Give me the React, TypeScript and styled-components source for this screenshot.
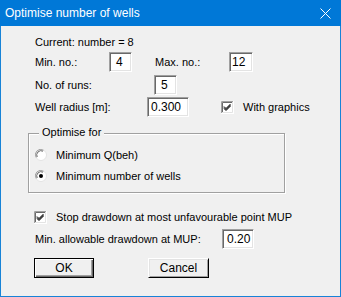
import React from "react";
import styled, { createGlobalStyle } from "styled-components";

const GlobalStyle = createGlobalStyle`
    html, body {
        margin: 0;
        padding: 0;
        background: #f0f0f0;
    }
`;

const Window = styled.div`
    width: 341px;
    height: 297px;
    box-sizing: border-box;
    border: 1px solid #1883d7;
    border-top: none;
    background: #f0f0f0;
    display: flex;
    flex-direction: column;
    font-family: "Liberation Sans", Arial, sans-serif;
    font-size: 11px;
    color: #000;
`;

const TitleBar = styled.div`
    height: 26px;
    margin: 0 -1px;
    background: #0078d7;
    color: #fff;
    display: flex;
    align-items: center;
    justify-content: space-between;
    padding: 0 10px 0 5px;
    font-size: 12px;
    flex-shrink: 0;
`;

const Title = styled.span`
    margin-top: -1px;
`;

const Body = styled.div`
    display: flex;
    flex-direction: column;
    padding: 9px 0 0 34px;
`;

const Row = styled.div<{ $h?: number; $mt?: number }>`
    display: flex;
    align-items: center;
    height: ${p => p.$h ?? 20}px;
    margin-top: ${p => p.$mt ?? 0}px;
`;

const Label = styled.span<{ $w?: number; $ml?: number }>`
    width: ${p => (p.$w ? `${p.$w}px` : 'auto')};
    margin-left: ${p => p.$ml ?? 0}px;
    white-space: nowrap;
    flex-shrink: 0;
`;

const Input = styled.div<{ $w: number; $pad?: number }>`
    width: ${p => p.$w}px;
    height: 20px;
    box-sizing: border-box;
    background: #fff;
    border-top: 1px solid #a0a0a0;
    border-left: 1px solid #a0a0a0;
    border-right: 1px solid #fff;
    border-bottom: 1px solid #fff;
    box-shadow: inset 1px 1px 0 #696969, inset -1px -1px 0 #e3e3e3;
    padding-left: ${p => p.$pad ?? 3}px;
    display: flex;
    align-items: center;
    font-size: 12px;
    flex-shrink: 0;
`;

const Group = styled.div`
    position: relative;
    margin: 16px 0 0 -7px;
    width: 257px;
    box-sizing: border-box;
    border: 1px solid #a0a0a0;
    box-shadow: 1px 1px 0 #fff, inset 1px 1px 0 #fff;
    padding: 13px 0 8px 6px;
    display: flex;
    flex-direction: column;
    gap: 5px;
`;

const Caption = styled.span`
    position: absolute;
    top: -8px;
    left: 10px;
    padding: 0 3px;
    background: #f0f0f0;
`;

const OptionRow = styled.div<{ $mt?: number; $ml?: number }>`
    display: flex;
    align-items: center;
    height: 16px;
    margin-top: ${p => p.$mt ?? 0}px;
    margin-left: ${p => p.$ml ?? 0}px;
    gap: 9px;
`;

const Buttons = styled.div`
    display: flex;
    gap: 54px;
    margin: 9px 0 0 -1px;
`;

const Button = styled.button<{ $default?: boolean; $w: number }>`
    width: ${p => p.$w}px;
    height: 20px;
    box-sizing: border-box;
    padding: 0;
    margin: 0;
    background: #f0f0f0;
    font-family: "Liberation Sans", Arial, sans-serif;
    font-size: 12px;
    color: #000;
    border: 1px solid ${p => (p.$default ? '#000' : '#fff')};
    border-right-color: #000;
    border-bottom-color: #000;
    box-shadow: ${p => (p.$default
        ? 'inset 1px 1px 0 #fff, inset -1px -1px 0 #696969, inset -2px -2px 0 #a0a0a0'
        : 'inset 1px 1px 0 #e3e3e3, inset -1px -1px 0 #a0a0a0')};
`;

const CloseIcon = () => (
    <svg width="11" height="11" viewBox="0 0 11 11">
        <path d="M0.5 0.5 L10.5 10.5 M10.5 0.5 L0.5 10.5" stroke="#fff" strokeWidth="1" />
    </svg>
);

const CheckBox = () => (
    <svg width="13" height="13" viewBox="0 0 13 13" style={{ flexShrink: 0 }}>
        <rect x="0" y="0" width="13" height="13" fill="#fff" />
        <path d="M0.5 12 V0.5 H12" stroke="#a0a0a0" fill="none" />
        <path d="M1.5 11 V1.5 H11" stroke="#696969" fill="none" />
        <path d="M1 11.5 H11.5 V1" stroke="#e3e3e3" fill="none" />
        <path d="M3 5.5 L5 7.5 L9.5 3 M3 6.5 L5 8.5 L9.5 4 M3 7.5 L5 9.5 L9.5 5" stroke="#000" fill="none" />
    </svg>
);

const Radio = ({ checked }: { checked?: boolean }) => (
    <svg width="12" height="12" viewBox="0 0 12 12" style={{ flexShrink: 0 }}>
        <circle cx="6" cy="6" r="5.5" fill="#fff" stroke="#e3e3e3" />
        <path d="M1.2 8.5 A5.3 5.3 0 0 1 8.5 1.2" stroke="#a0a0a0" fill="none" />
        <path d="M2.2 8 A4.3 4.3 0 0 1 8 2.2" stroke="#696969" fill="none" />
        {checked && <circle cx="6" cy="6" r="2" fill="#000" />}
    </svg>
);

export default function App() {
    return (
        <>
            <GlobalStyle />
            <Window>
                <TitleBar>
                    <Title>Optimise number of wells</Title>
                    <CloseIcon />
                </TitleBar>
                <Body>
                    <Row $h={14}>
                        <Label>Current: number = 8</Label>
                    </Row>
                    <Row $mt={3}>
                        <Label $w={74}>Min. no.:</Label>
                        <Input $w={23} $pad={6}>4</Input>
                        <Label $w={74} $ml={23}>Max. no.:</Label>
                        <Input $w={24} $pad={2}>12</Input>
                    </Row>
                    <Row $mt={3}>
                        <Label $w={119}>No. of runs:</Label>
                        <Input $w={23} $pad={6}>5</Input>
                    </Row>
                    <Row $mt={2}>
                        <Label $w={112}>Well radius [m]:</Label>
                        <Input $w={42} $pad={3}>0.300</Input>
                        <OptionRow $ml={32}>
                            <CheckBox />
                            <span>With graphics</span>
                        </OptionRow>
                    </Row>
                    <Group>
                        <Caption>Optimise for</Caption>
                        <OptionRow>
                            <Radio />
                            <span>Minimum Q(beh)</span>
                        </OptionRow>
                        <OptionRow>
                            <Radio checked />
                            <span>Minimum number of wells</span>
                        </OptionRow>
                    </Group>
                    <OptionRow $mt={16} $ml={-1}>
                        <CheckBox />
                        <span>Stop drawdown at most unfavourable point MUP</span>
                    </OptionRow>
                    <Row $mt={4}>
                        <Label $w={187}>Min. allowable drawdown at MUP:</Label>
                        <Input $w={32} $pad={4}>0.20</Input>
                    </Row>
                    <Buttons>
                        <Button $default $w={60}>OK</Button>
                        <Button $w={61}>Cancel</Button>
                    </Buttons>
                </Body>
            </Window>
        </>
    );
}
